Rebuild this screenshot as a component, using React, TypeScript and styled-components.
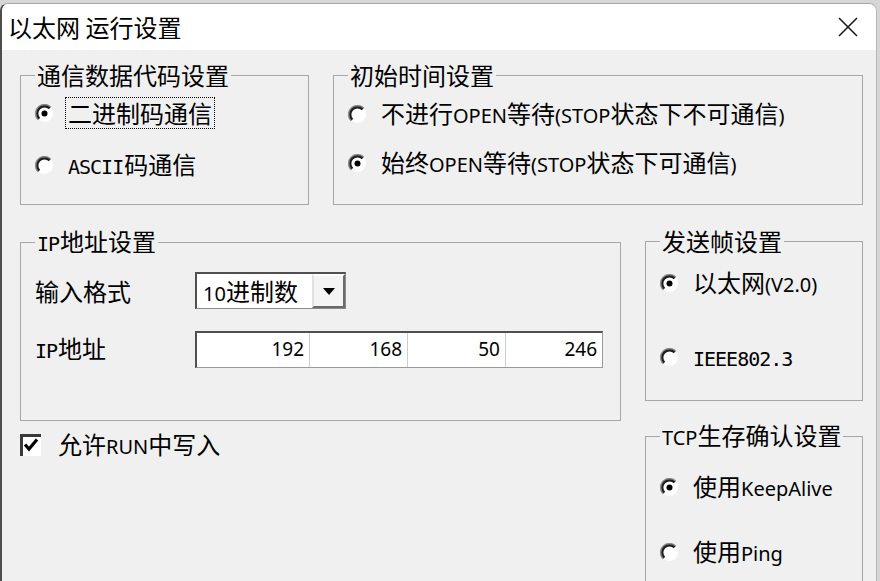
import React from "react";
import styled, { createGlobalStyle } from "styled-components";

const Global = createGlobalStyle`
  html, body { margin: 0; padding: 0; background: #d6d6d6; }
  body { font-family: "Noto Sans CJK SC", "Noto Sans", sans-serif; color: #000; }
  * { box-sizing: border-box; }
`;

const Window = styled.div`
  width: 877px;
  height: 578px;
  margin-top: 3px;
  background: #f0f0f0;
  border-left: 2px solid #4d4d4d;
  border-top: 1px solid #a8a8a8;
  border-right: 1px solid #b8b8b8;
  border-radius: 8px 8px 0 0;
  overflow: hidden;
  display: flex;
  flex-direction: column;
`;

const TitleBar = styled.div`
  height: 46px;
  flex: none;
  background: #ffffff;
  display: flex;
  align-items: center;
  justify-content: space-between;
  padding: 0 18px 0 6px;
`;

const Title = styled.div`
  font-size: 24px;
  line-height: 30px;
`;

const Content = styled.div`
  padding: 11px 0 0 18px;
  display: flex;
  flex-direction: column;
`;

const Row = styled.div<{ $mt?: number }>`
  display: flex;
  gap: 24px;
  align-items: flex-start;
  margin-top: ${(p) => p.$mt ?? 0}px;
`;

const Column = styled.div<{ $gap: number }>`
  display: flex;
  flex-direction: column;
  gap: ${(p) => p.$gap}px;
`;

const Group = styled.fieldset<{ $w: number; $h: number }>`
  width: ${(p) => p.$w}px;
  height: ${(p) => p.$h}px;
  flex: none;
  margin: 0;
  padding: 0 0 0 14px;
  min-width: 0;
  border: 1px solid #a6a6a6;
`;

const Legend = styled.legend`
  padding: 0 2px;
  font-size: 24px;
  line-height: 28px;
  white-space: nowrap;
`;

const Stack = styled.div<{ $pt: number; $gap: number }>`
  display: flex;
  flex-direction: column;
  padding-top: ${(p) => p.$pt}px;
  gap: ${(p) => p.$gap}px;
`;

const Option = styled.div`
  display: flex;
  align-items: center;
  height: 32px;
`;

const OptionLabel = styled.span<{ $focus?: boolean }>`
  margin-left: 11px;
  padding: 0 2px;
  font-size: 24px;
  line-height: 30px;
  white-space: nowrap;
  border: 1px dotted ${(p) => (p.$focus ? "#000" : "transparent")};
`;

const Lat = styled.span<{ $mono?: boolean }>`
  font-family: ${(p) =>
    p.$mono ? '"DejaVu Sans Mono", monospace' : '"Noto Sans", sans-serif'};
  font-size: ${(p) => (p.$mono ? 20 : 20)}px;
  letter-spacing: ${(p) => (p.$mono ? "-1px" : "0")};
  margin-right: ${(p) => (p.$mono ? "1px" : "0")};
`;

const FieldGrid = styled.div`
  display: grid;
  grid-template-columns: 160px auto;
  row-gap: 22px;
  padding-top: 14px;
  align-items: center;
  justify-items: start;
`;

const FieldLabel = styled.span`
  font-size: 24px;
  line-height: 30px;
`;

const Combo = styled.div`
  width: 151px;
  height: 37px;
  display: flex;
  background: #fff;
  border-top: 2px solid #505050;
  border-left: 2px solid #505050;
  border-right: 1px solid #8a8a8a;
  border-bottom: 1px solid #8a8a8a;
`;

const ComboText = styled.div`
  flex: 1;
  padding-left: 6px;
  font-size: 24px;
  line-height: 33px;
  white-space: nowrap;
`;

const ComboButton = styled.div`
  width: 33px;
  display: flex;
  align-items: center;
  justify-content: center;
  background: #f4f4f4;
  border-top: 2px solid #fff;
  border-left: 2px solid #e2e2e2;
  border-right: 2px solid #6a6a6a;
  border-bottom: 2px solid #6a6a6a;
`;

const IpBox = styled.div`
  width: 408px;
  height: 37px;
  display: grid;
  grid-template-columns: 112px 98px 98px 1fr;
  background: #fff;
  border-top: 2px solid #505050;
  border-left: 2px solid #505050;
  border-right: 1px solid #9a9a9a;
  border-bottom: 1px solid #9a9a9a;
`;

const IpCell = styled.div`
  text-align: right;
  padding-right: 5px;
  font-family: "Noto Sans", sans-serif;
  font-size: 19px;
  line-height: 33px;
  & + & {
    border-left: 1px solid #cdcdcd;
  }
`;

const CheckRow = styled.div`
  display: flex;
  align-items: center;
  gap: 17px;
  margin-top: 12px;
  height: 24px;
`;

const CheckText = styled.span`
  font-size: 24px;
  line-height: 30px;
  white-space: nowrap;
`;

const Radio = ({ checked }: { checked?: boolean }) => (
  <svg width="19" height="19" viewBox="0 0 19 19" style={{ flex: "none" }}>
    <circle cx="9.5" cy="9.5" r="8.5" fill="#fff" />
    <path d="M3.2 15.8 A8.9 8.9 0 0 1 15.8 3.2" fill="none" stroke="#8a8a8a" strokeWidth="1.6" />
    <path d="M4.4 14.6 A7.2 7.2 0 0 1 14.6 4.4" fill="none" stroke="#1e1e1e" strokeWidth="2.2" />
    {checked && <circle cx="9.5" cy="9.5" r="3" fill="#000" />}
  </svg>
);

const CheckBox = () => (
  <svg width="21" height="22" viewBox="0 0 21 22" style={{ flex: "none" }}>
    <rect x="0" y="0" width="21" height="22" fill="#fff" />
    <path d="M1.5 22 V1.5 H21" fill="none" stroke="#3a3a3a" strokeWidth="3" />
    <path d="M5 10.5 L9 15 L17 5.5" fill="none" stroke="#000" strokeWidth="3.2" strokeLinejoin="miter" />
  </svg>
);

const CloseIcon = () => (
  <svg width="20" height="20" viewBox="0 0 20 20">
    <path d="M1 1 L19 19 M19 1 L1 19" stroke="#1a1a1a" strokeWidth="1.6" fill="none" />
  </svg>
);

const Arrow = () => (
  <svg width="12" height="7" viewBox="0 0 12 7">
    <path d="M0 0 H12 L6 7 Z" fill="#000" />
  </svg>
);

export default function App() {
  return (
    <>
      <Global />
      <Window>
        <TitleBar>
          <Title>以太网 运行设置</Title>
          <CloseIcon />
        </TitleBar>
        <Content>
          <Row>
            <Group $w={289} $h={144}>
              <Legend>通信数据代码设置</Legend>
              <Stack $pt={8} $gap={20}>
                <Option>
                  <Radio checked />
                  <OptionLabel $focus>二进制码通信</OptionLabel>
                </Option>
                <Option>
                  <Radio />
                  <OptionLabel>
                    <Lat $mono>ASCII</Lat>码通信
                  </OptionLabel>
                </Option>
              </Stack>
            </Group>
            <Group $w={530} $h={144}>
              <Legend>初始时间设置</Legend>
              <Stack $pt={9} $gap={17}>
                <Option>
                  <Radio />
                  <OptionLabel>
                    不进行<Lat>OPEN</Lat>等待<Lat>(STOP</Lat>状态下不可通信<Lat>)</Lat>
                  </OptionLabel>
                </Option>
                <Option>
                  <Radio checked />
                  <OptionLabel>
                    始终<Lat>OPEN</Lat>等待<Lat>(STOP</Lat>状态下可通信<Lat>)</Lat>
                  </OptionLabel>
                </Option>
              </Stack>
            </Group>
          </Row>
          <Row $mt={22}>
            <Column $gap={0}>
              <Group $w={601} $h={194}>
                <Legend>
                  <Lat $mono>IP</Lat>地址设置
                </Legend>
                <FieldGrid>
                  <FieldLabel>输入格式</FieldLabel>
                  <Combo>
                    <ComboText>
                      <Lat>10</Lat>进制数
                    </ComboText>
                    <ComboButton>
                      <Arrow />
                    </ComboButton>
                  </Combo>
                  <FieldLabel>
                    <Lat $mono>IP</Lat>地址
                  </FieldLabel>
                  <IpBox>
                    <IpCell>192</IpCell>
                    <IpCell>168</IpCell>
                    <IpCell>50</IpCell>
                    <IpCell>246</IpCell>
                  </IpBox>
                </FieldGrid>
              </Group>
              <CheckRow>
                <CheckBox />
                <CheckText>
                  允许<Lat>RUN</Lat>中写入
                </CheckText>
              </CheckRow>
            </Column>
            <Column $gap={20}>
              <Group $w={218} $h={174}>
                <Legend>发送帧设置</Legend>
                <Stack $pt={12} $gap={42}>
                  <Option>
                    <Radio checked />
                    <OptionLabel>
                      以太网<Lat>(V2.0)</Lat>
                    </OptionLabel>
                  </Option>
                  <Option>
                    <Radio />
                    <OptionLabel>
                      <Lat $mono>IEEE802.3</Lat>
                    </OptionLabel>
                  </Option>
                </Stack>
              </Group>
              <Group $w={218} $h={200}>
                <Legend>
                  <Lat>TCP</Lat>生存确认设置
                </Legend>
                <Stack $pt={19} $gap={33}>
                  <Option>
                    <Radio checked />
                    <OptionLabel>
                      使用<Lat>KeepAlive</Lat>
                    </OptionLabel>
                  </Option>
                  <Option>
                    <Radio />
                    <OptionLabel>
                      使用<Lat>Ping</Lat>
                    </OptionLabel>
                  </Option>
                </Stack>
              </Group>
            </Column>
          </Row>
        </Content>
      </Window>
    </>
  );
}
